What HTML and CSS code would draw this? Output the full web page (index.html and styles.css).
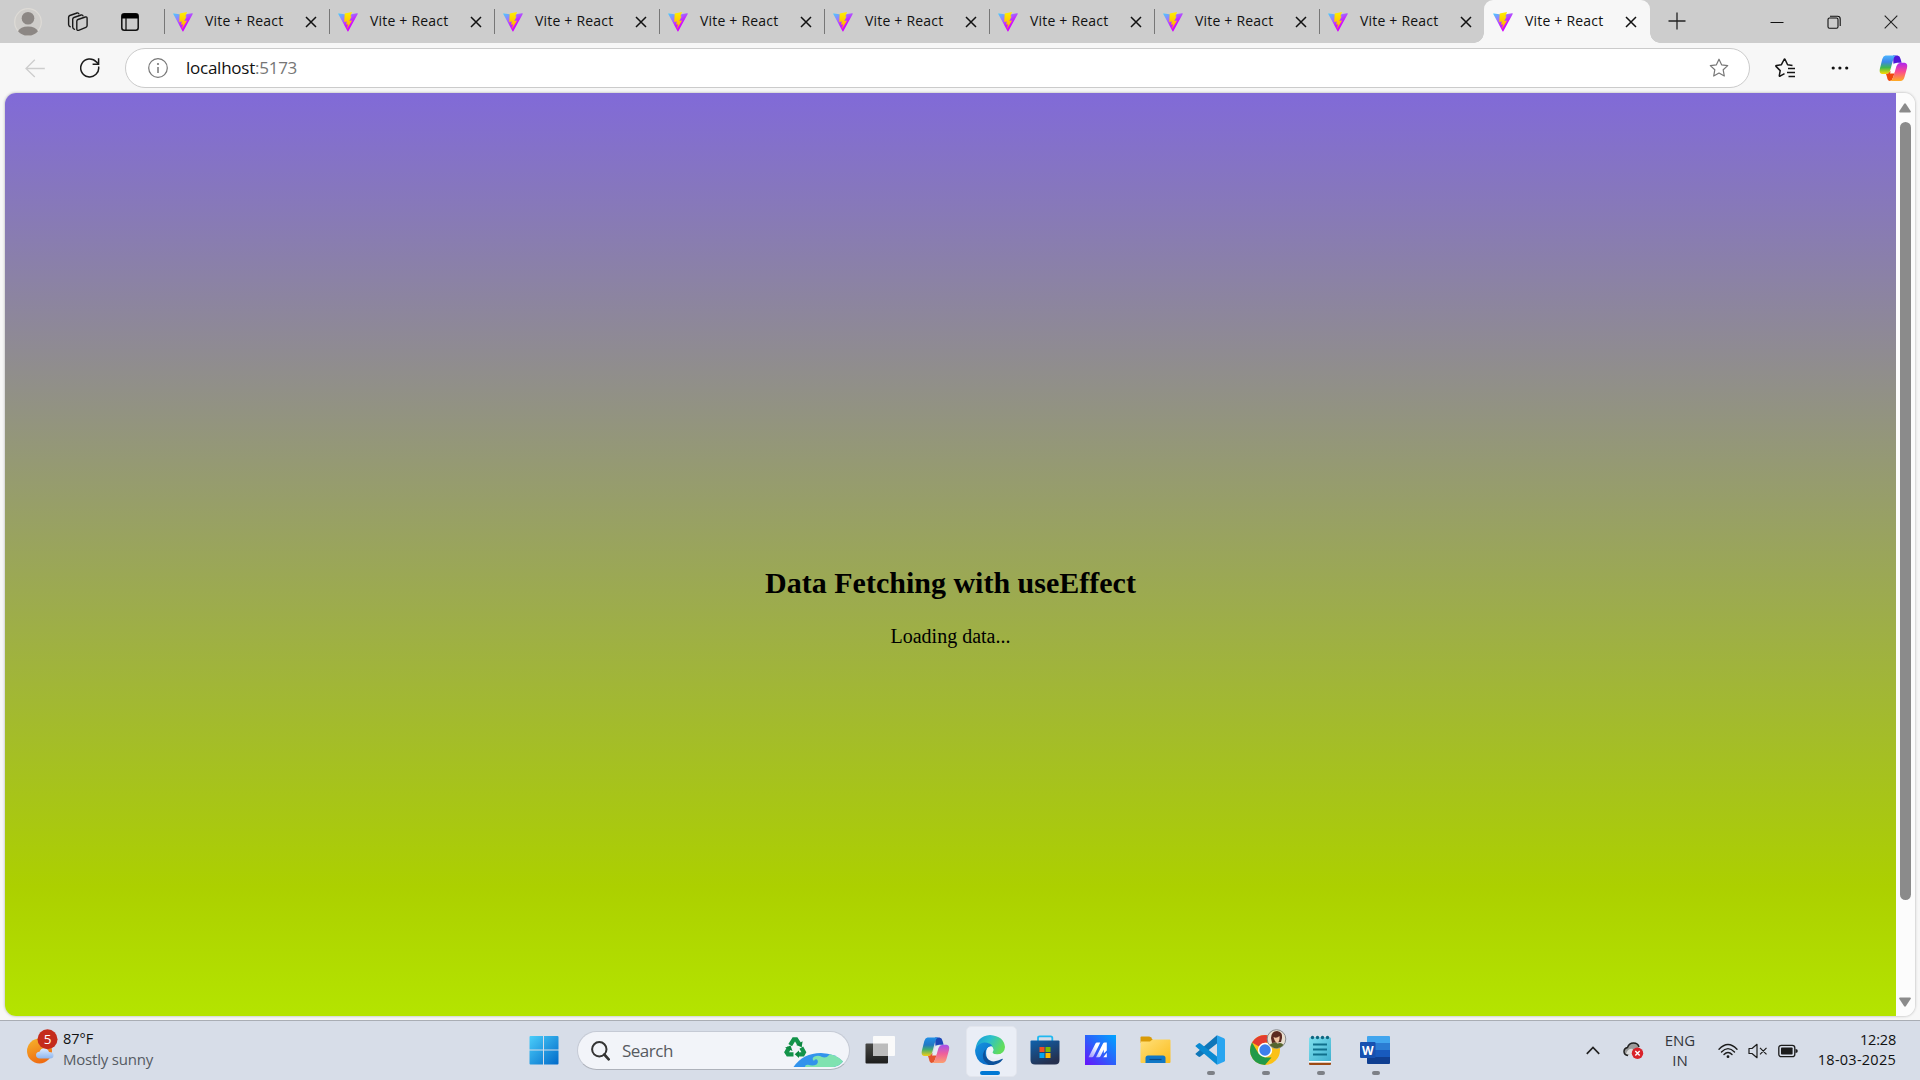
FILE: index.html
```html
<!DOCTYPE html>
<html lang="en">
<head>
<meta charset="utf-8">
<title>Vite + React</title>
<link rel="stylesheet" href="styles.css">
</head>
<body>
<svg class="defs" width="0" height="0" aria-hidden="true">
  <defs>
    <linearGradient id="viteBody" x1="0" y1="0" x2=".6" y2=".9"><stop offset="0" stop-color="#41d1ff"/><stop offset=".4" stop-color="#a074ff"/><stop offset=".7" stop-color="#c81cff"/><stop offset="1" stop-color="#d400ff"/></linearGradient>
    <linearGradient id="viteBolt" x1="0" y1="0" x2="0" y2="1"><stop offset="0" stop-color="#fff000"/><stop offset="1" stop-color="#ffa800"/></linearGradient>
    <linearGradient id="copA" x1="0" y1="0" x2="0" y2="1"><stop offset="0" stop-color="#4bb4ff"/><stop offset=".35" stop-color="#3c86e8"/><stop offset=".65" stop-color="#3fb84f"/><stop offset="1" stop-color="#ffdc00"/></linearGradient>
    <linearGradient id="copB" x1="0" y1="0" x2="0" y2="1"><stop offset="0" stop-color="#b024f0"/><stop offset=".5" stop-color="#fb4c8d"/><stop offset="1" stop-color="#ffae22"/></linearGradient>
    <linearGradient id="copA2" x1="0" y1="0" x2="0" y2="1"><stop offset="0" stop-color="#1f8fe6"/><stop offset=".4" stop-color="#2378c4"/><stop offset=".65" stop-color="#45ad6d"/><stop offset="1" stop-color="#f4ce14"/></linearGradient>
    <linearGradient id="copB2" x1="0" y1="0" x2="0" y2="1"><stop offset="0" stop-color="#a450ec"/><stop offset=".5" stop-color="#f0609a"/><stop offset="1" stop-color="#fba070"/></linearGradient>
    <linearGradient id="winG" gradientUnits="userSpaceOnUse" x1="0" y1="0" x2="30" y2="30"><stop offset="0" stop-color="#4cd0fb"/><stop offset="1" stop-color="#0068c8"/></linearGradient>
    <linearGradient id="edgeTop" x1="0" y1="0" x2="1" y2=".4"><stop offset="0" stop-color="#1496d8"/><stop offset=".5" stop-color="#2cc0cc"/><stop offset="1" stop-color="#62dd5c"/></linearGradient>
    <linearGradient id="edgeLeft" x1="0" y1="0" x2=".6" y2="1"><stop offset="0" stop-color="#1593de"/><stop offset="1" stop-color="#0a6cc8"/></linearGradient>
    <linearGradient id="storeG" x1="0" y1="0" x2=".5" y2="1"><stop offset="0" stop-color="#0f62ad"/><stop offset="1" stop-color="#25304f"/></linearGradient>
    <linearGradient id="maG" x1="0" y1="1" x2="1" y2="0"><stop offset="0" stop-color="#6a12fb"/><stop offset=".5" stop-color="#2a62fb"/><stop offset="1" stop-color="#00a5ff"/></linearGradient>
    <linearGradient id="maW" x1="0" y1="1" x2="1" y2="0"><stop offset="0" stop-color="#fff" stop-opacity=".45"/><stop offset=".6" stop-color="#fff"/></linearGradient>
    <linearGradient id="folderG" x1="0" y1="0" x2="1" y2="1"><stop offset="0" stop-color="#ffe07a"/><stop offset="1" stop-color="#fbbc1c"/></linearGradient>
    <linearGradient id="noteG" x1="0" y1="0" x2="1" y2="1"><stop offset="0" stop-color="#7fe0ee"/><stop offset="1" stop-color="#3fb0cf"/></linearGradient>
    <linearGradient id="sunG" x1="0" y1="0" x2=".4" y2="1"><stop offset="0" stop-color="#f6b52c"/><stop offset="1" stop-color="#ef6d12"/></linearGradient>
    <linearGradient id="cloudG" x1="0" y1="0" x2="0" y2="1"><stop offset="0" stop-color="#dcebff"/><stop offset="1" stop-color="#8fb6ee"/></linearGradient>
    <linearGradient id="darkG" x1="0" y1="0" x2="0" y2="1"><stop offset="0" stop-color="#484846"/><stop offset="1" stop-color="#1d1d1c"/></linearGradient>
    <symbol id="vite" viewBox="0 0 20 20">
      <path d="M.4 2.2Q0 1.2 1 1.4L10 2.8l9-1.500q1.200-.2.6.9L10.500 19q-.6 1-1.100 0z" fill="url(#viteBody)"/>
      <path d="M14 .1 6.700 1.400 6.200 10l2.600-.5-.7 3.200 2-.5-1.400 5.300 5.400-8.900-2.800.4 2.300-4.600-1.200.1z" fill="url(#viteBolt)"/>
    </symbol>
    <symbol id="x" viewBox="0 0 12 12"><path d="M1 1l10 10M11 1 1 11" fill="none" stroke="#111" stroke-width="1.500"/></symbol>
    <symbol id="star" viewBox="0 0 20 20"><path d="M10 1.200l2.600 5.600 6.100.8-4.500 4.200 1.100 6.200-5.300-3-5.300 3 1.100-6.200L1.300 7.600l6.100-.8z" fill="none" stroke="#777" stroke-width="1.200" stroke-linejoin="round"/></symbol>
  </defs>
</svg>

<div class="screen">
  <header class="tabstrip">
    <div class="strip-tools">
      <svg class="avatar" width="28" height="28" viewBox="0 0 28 28"><circle cx="14" cy="14" r="13.300" fill="#cfcdca" stroke="#dedbd6" stroke-width="1.200"/><circle cx="14" cy="10.200" r="6.300" fill="#8c8784"/><path d="M4 23.200a10.500 6.800 0 0 1 20 0A13 13 0 0 1 14 27.600 13 13 0 0 1 4 23.200z" fill="#8c8784"/></svg>
      <svg class="workspaces" width="22" height="22" viewBox="0 0 22 22" fill="none" stroke="#1a1a1a" stroke-width="1.400" stroke-linejoin="round" stroke-linecap="round"><path d="M9.800 10.300q0-1.300 1.200-1.800l7.300-2.500q1.800-.5 1.800 1.200v7.300q0 1.300-1.200 1.800l-7.300 3q-1.800.5-1.800-1.200z"/><path d="M7.500 18.300Q5.700 17.700 5.700 16V8.300q0-1.300 1.200-1.800L14.200 4q1.400-.4 1.800.9"/><path d="M3.300 15.800Q1.600 15 1.600 13.400V6.300q0-1.300 1.200-1.800L10.100 2q1.400-.4 1.800.9"/></svg>
      <svg class="tabactions" width="18" height="18" viewBox="0 0 18 18"><rect x=".8" y=".8" width="16.400" height="16.400" rx="2.500" fill="none" stroke="#111" stroke-width="1.500"/><path d="M.8 5V3Q.8.800 3 .800h12q2.200 0 2.200 2.200v2.400H.800z" fill="#000"/><path d="M5 5v12" stroke="#111" stroke-width="1.300"/></svg>
    </div>
    <nav class="tabs">
      <div class="tab"><svg class="favicon"><use href="#vite"/></svg><span class="tab-title">Vite + React</span><svg class="tab-close"><use href="#x"/></svg></div>
      <div class="tab"><svg class="favicon"><use href="#vite"/></svg><span class="tab-title">Vite + React</span><svg class="tab-close"><use href="#x"/></svg></div>
      <div class="tab"><svg class="favicon"><use href="#vite"/></svg><span class="tab-title">Vite + React</span><svg class="tab-close"><use href="#x"/></svg></div>
      <div class="tab"><svg class="favicon"><use href="#vite"/></svg><span class="tab-title">Vite + React</span><svg class="tab-close"><use href="#x"/></svg></div>
      <div class="tab"><svg class="favicon"><use href="#vite"/></svg><span class="tab-title">Vite + React</span><svg class="tab-close"><use href="#x"/></svg></div>
      <div class="tab"><svg class="favicon"><use href="#vite"/></svg><span class="tab-title">Vite + React</span><svg class="tab-close"><use href="#x"/></svg></div>
      <div class="tab"><svg class="favicon"><use href="#vite"/></svg><span class="tab-title">Vite + React</span><svg class="tab-close"><use href="#x"/></svg></div>
      <div class="tab"><svg class="favicon"><use href="#vite"/></svg><span class="tab-title">Vite + React</span><svg class="tab-close"><use href="#x"/></svg></div>
      <div class="tab tab-active"><svg class="favicon"><use href="#vite"/></svg><span class="tab-title">Vite + React</span><svg class="tab-close"><use href="#x"/></svg></div>
    </nav>
    <svg class="newtab" width="18" height="18" viewBox="0 0 18 18"><path d="M9 .5v17M.5 9h17" stroke="#222" stroke-width="1.300"/></svg>
    <div class="window-controls">
      <svg width="14" height="14" viewBox="0 0 14 14"><path d="M.5 7.500h13" stroke="#111" stroke-width="1"/></svg>
      <svg width="14" height="14" viewBox="0 0 14 14" fill="none" stroke="#111" stroke-width="1.100"><rect x="1" y="3" width="10" height="10.200" rx="1.500"/><path d="M3 1.200h7.500q2.700 0 2.700 2.700V11"/></svg>
      <svg width="14" height="14" viewBox="0 0 14 14"><path d="M.7.700l12.600 12.600M13.300.700.700 13.300" stroke="#222" stroke-width="1.100"/></svg>
    </div>
  </header>

  <div class="toolbar">
    <svg class="back" width="20" height="20" viewBox="0 0 20 20" fill="none" stroke="#cdcdcd" stroke-width="1.300"><path d="M19.800 10.500H1M9.800 1.800 1 10.500l8.800 8.500"/></svg>
    <svg class="reload" width="20" height="22" viewBox="0 0 20 22" fill="none" stroke="#1b1b1b" stroke-width="1.500"><path d="M18.600 9.500a9 9 0 1 1-2.200-4.600l2.100 2.100"/><path d="M18.600 1.200v6h-6"/></svg>
    <div class="address">
      <svg width="20" height="20" viewBox="0 0 20 20"><circle cx="10" cy="10" r="9.300" fill="none" stroke="#777" stroke-width="1.200"/><path d="M10 9v6" stroke="#777" stroke-width="1.500"/><circle cx="10" cy="6" r="1.100" fill="#777"/></svg>
      <span class="url">localhost<span class="port">:5173</span></span>
      <svg class="star" width="20" height="20"><use href="#star"/></svg>
    </div>
    <svg class="favorites" width="20" height="20" viewBox="0 0 20 20" fill="none" stroke="#151515" stroke-width="1.500" stroke-linejoin="round"><path d="M9.500 15.600 5 18.200q-.8.300-.7-.6l.9-5L1 8.400q-.5-.7.400-.9l5-.8 2.700-5.200q.5-.8 1 0l2.500 5.200 4.900.800"/><path d="M13 10.500h7M12 14.500h8M13.500 18.500H20"/></svg>
    <svg class="more" width="18" height="6" viewBox="0 0 18 6" fill="#111"><circle cx="2.200" cy="3" r="1.600"/><circle cx="8.900" cy="3" r="1.600"/><circle cx="15.700" cy="3" r="1.600"/></svg>
    <svg class="copilot" width="29" height="27" viewBox="0 0 29 27"><path d="M14 .600h4.500Q21 1 21.600 4l1 3.700H18q-2.500.3-3.500 2.300z" fill="#5018d8"/><path d="M6.500.600H17q-2 .900-2.800 4L11 16q-1 3-4 3H3Q0 18.500.800 14L3.300 4Q4.300.800 6.500.600z" fill="url(#copA)"/><path d="M7 19q2.500 0 4-2.500h5L14.300 22q-.8 3-3.300 4-2.500-.2-3-4z" fill="#f0480c"/><path d="M14.500 8.500h4L15.500 18.500H11z" fill="#fff"/><path d="M21.500 26H11q2.500-1 3.300-4L17.500 11q1-3 4-3.300H25.500Q29 8 28 13l-2.500 9q-1 3.800-4 4z" fill="url(#copB)"/></svg>
  </div>

  <div class="viewport">
    <main class="page">
      <h2>Data Fetching with useEffect</h2>
      <p>Loading data...</p>
    </main>
    <div class="scrollbar">
      <svg width="12" height="10" viewBox="0 0 12 10"><path d="M5 .900q1-1.200 2 0l4.600 7q.8 1.600-.8 1.600H1.200Q-.400 9.500.400 8z" fill="#8b8b8b"/></svg>
      <div class="thumb"></div>
      <svg class="down" width="12" height="10" viewBox="0 0 12 10"><path d="M5 9.100q1 1.200 2 0l4.600-7Q12.400.500 10.800.500H1.200Q-.400.500.400 2z" fill="#8b8b8b"/></svg>
    </div>
  </div>

  <footer class="taskbar">
    <div class="weather">
      <svg width="34" height="36" viewBox="0 0 34 36"><circle cx="13.500" cy="22" r="12.500" fill="url(#sunG)"/><path d="M14 29.500q-4-.3-4-3.500 0-3 3.500-3.300Q15 19 18.500 19.300q3.500.2 4.500 3.700 4.500 0 4.500 3.200 0 3.300-3.500 3.300z" fill="url(#cloudG)"/><circle cx="21.500" cy="10.300" r="10" fill="#c42b1c"/><text class="badge-text" x="21.500" y="15.200" text-anchor="middle">5</text></svg>
      <div class="weather-text"><span class="temp">87°F</span><span class="sky">Mostly sunny</span></div>
    </div>
    <div class="app">
      <svg width="30" height="30" viewBox="0 0 30 30" fill="url(#winG)"><path d="M1.500 1H14v13.500H.500V2q0-1 1-1zM15 1h13.500q1 0 1 1v12.500H15zM.500 15.500H14V29.500H1.500q-1 0-1-1zM15 15.500h14.500v13q0 1-1 1H15z"/></svg>
    </div>
    <div class="search">
      <svg width="19" height="20" viewBox="0 0 19 20" fill="none" stroke="#333"><circle cx="8.300" cy="8.300" r="7.200" stroke-width="2"/><path d="M13.300 13.500l4.400 4.800" stroke-width="2.600" stroke-linecap="round"/></svg>
      <span class="search-label">Search</span>
      <svg class="doodle" width="60" height="32" viewBox="0 0 60 32">
        <g transform="translate(1 0)" fill="none" stroke="#13934a" stroke-width="4.300"><path d="M6.200 9.200 9.800 3.400h2.400l3 4.600"/><path d="M5.200 11.600 2.600 16.200 4 18.400h5.500"/><path d="M17.300 11.600l2.600 4.600-1.200 2.200H14"/></g>
        <g transform="translate(1 0)" fill="#0c8740"><path d="M18.600 5.200l-.9 6-5.500-2.300z"/><path d="M1 11.800l5.500-2.300 2 5.400z"/><path d="M15 14.500v7.400l-4.300-3.700z"/></g>
        <path d="M10.500 31Q20 17.200 38 17q14 .3 22 8.500-3 4-9 5.500z" fill="#3293ec"/><path d="M22 31q0-2.500 3-2.200 5 1.500 8.500-.3 2.500-2.500.5-5-2.500-.7-3 1.500-3-2.500.5-4.500 4-1.800 7.500.5 4.500 1.500 8-2.800Q54.500 19.500 60 25.500q-3 4-9 5.500z" fill="#7fe2b0"/>
      </svg>
    </div>
    <div class="apps">
      <div class="app"><svg width="30" height="28" viewBox="0 0 30 28"><rect x=".5" y="7.500" width="22.500" height="20" rx="1" fill="url(#darkG)"/><rect x="8" y="0" width="22" height="20" rx="1" fill="#fafafa"/><rect x="8" y="7.500" width="15" height="12.500" fill="#bcbcbc"/></svg></div>
      <div class="app"><svg width="29" height="27" viewBox="0 0 29 27"><path d="M14 .600h4.500Q21 1 21.600 4l1 3.700H18q-2.500.3-3.500 2.300z" fill="#1b47b8"/><path d="M6.500.600H17q-2 .900-2.800 4L11 16q-1 3-4 3H3Q0 18.500.800 14L3.300 4Q4.300.800 6.500.600z" fill="url(#copA2)"/><path d="M7 19q2.500 0 4-2.500h5L14.300 22q-.8 3-3.300 4-2.500-.2-3-4z" fill="#e5542d"/><path d="M14.500 8.500h4L15.500 18.500H11z" fill="#e6eaf2"/><path d="M21.500 26H11q2.500-1 3.300-4L17.500 11q1-3 4-3.300H25.500Q29 8 28 13l-2.500 9q-1 3.800-4 4z" fill="url(#copB2)"/></svg></div>
      <div class="app app-focused"><svg width="30" height="30" viewBox="0 0 30 30"><path d="M.500 14Q2 1 15 0q14 1 15 12-.5 6.500-7 7.500-5 .2-6-2.200 2-2 1-4.300Q15 7.500 8.500 8 2.500 9 .500 14z" fill="url(#edgeTop)"/><path d="M.100 15Q2 8 9 7.500q6-.2 8.500 3.700-4.500-.3-6 4Q9.500 23 17 29.800 4 31.500.600 19.500 0 17 .100 15z" fill="url(#edgeLeft)"/><path d="M11.200 14q-2.700 5 .800 9 4 5 11 2.600 3-1.200 4.300-1.900.8-.1.400.9Q23 31 14.500 29.900 7 26.500 8 19q1-4 3.200-5z" fill="#0c529c"/><path d="M11.600 16q0-4 4-4.200 2.700.3 2.900 3.200-.1 1-1 2.200.2 1.700 4 2.300 4 .2 7.500-2.200-1 4-5 5.200-7 1.300-10.700-2.500-1.600-1.800-1.700-4z" fill="#eef2fa"/></svg><span class="running running-wide"></span></div>
      <div class="app"><svg width="30" height="30" viewBox="0 0 30 30"><path d="M8 7V3q0-1.700 1.700-1.700h11Q22.300 1.300 22.300 3v4" fill="none" stroke="#20b8f0" stroke-width="1.800"/><path d="M1.500 5.500h27q1 0 1 1V25q0 4.500-4.500 4.500H5Q.500 29.500.500 25V6.500q0-1 1-1z" fill="url(#storeG)"/><path d="M9.500 12H14.500v5H9.500z" fill="#f25022"/><path d="M15.500 12h5v5h-5z" fill="#7fba00"/><path d="M9.500 18h5v5h-5z" fill="#00a4ef"/><path d="M15.500 18h5v5h-5z" fill="#ffb900"/></svg></div>
      <div class="app"><svg width="31" height="30" viewBox="0 0 31 30"><path d="M0 0h31v30H0z" fill="url(#maG)"/><path d="M3.500 22.300 10.500 8.500q.5-1 1.500-1h3.300L8.500 21.300q-.5 1-1.500 1zM11 22.300 18 8.500q.5-1 1.500-1h2.300v8l-3 3V14.500L15.500 21.300q-.5 1-1.500 1z" fill="url(#maW)"/><path d="M18.300 22.300l3.500-4.500v4.500z" fill="#fff"/></svg></div>
      <div class="app"><svg width="31" height="28" viewBox="0 0 31 28"><path d="M.500 1.500q0-1 1-1H9q1 0 1.800.8L13 4v3H.500z" fill="#d99a06"/><path d="M.500 5.500H10L12.500 3.500H29.500q1 0 1 1V26q0 1-1 1h-28q-1 0-1-1z" fill="url(#folderG)"/><path d="M5.500 27v-5q0-2.500 2.500-2.500h15q2.500 0 2.500 2.500v5z" fill="#0f77c6"/><path d="M9.500 23.500h12" stroke="#0a4b86" stroke-width="1.200"/></svg></div>
      <div class="app"><svg width="30" height="30" viewBox="0 0 30 30"><path d="M.700 18.500 22 .300v8.200L5.400 21.500q-1 .8-2 0l-2.600-2q-.7-.5-.1-1z" fill="#0f76b8"/><path d="M.700 11.500 22 29.700v-8.200L5.400 8.500q-1-.8-2 0l-2.600 2q-.7.500-.1 1z" fill="#0a8ad2"/><path d="M22 .300 29 3.300q1 .5 1 1.500v20.400q0 1-1 1.500l-7 3z" fill="#29a5f0"/></svg><span class="running"></span></div>
      <div class="app app-chrome"><svg width="37" height="36" viewBox="0 0 37 36"><circle cx="15" cy="21" r="15" fill="#fbc116"/><path d="M15 21 2 13.500Q6.500 6 15 6t13 7.500H15z" fill="#e33b2e"/><path d="M2 13.500 8.500 24.500 15 28.500h6.500L15 36Q4 35.500.600 25.500-1 19 2 13.500z" fill="#219a49"/><circle cx="15" cy="21" r="7.200" fill="#fff"/><circle cx="15" cy="21" r="5.700" fill="#3d7fec"/><circle cx="26.500" cy="10" r="9.300" fill="#e9dfcf" stroke="#888b90" stroke-width="1"/><path d="M21 9q.5-7 6-7 6 1 5 7l-1 4-9 1z" fill="#5c2a20"/><path d="M23.500 8q3 2 6-1 .5 5-2 7-3-1-4-6z" fill="#f0c3a0"/><path d="M19.500 16q5-4 8-1.500 4-1.500 6 1.500-6 6.500-14 0z" fill="#56652f"/></svg><span class="running"></span></div>
      <div class="app"><svg width="22" height="31" viewBox="0 0 22 31"><path d="M0 27.500h22V29q0 1-1 1H1q-1 0-1-1z" fill="#9c4a14"/><path d="M0 25h22v2.500H0z" fill="#fff"/><path d="M1 2.500h20q1 0 1 1V26H0V3.500q0-1 1-1z" fill="url(#noteG)"/><g fill="#0e6680"><circle cx="3.500" cy="2.500" r="1.700"/><circle cx="8.500" cy="2.500" r="1.700"/><circle cx="13.500" cy="2.500" r="1.700"/><circle cx="18.500" cy="2.500" r="1.700"/></g><path d="M4 9.500h14M4 14.500h14M4 19.500h14" stroke="#10708c" stroke-width="1.800"/></svg><span class="running"></span></div>
      <div class="app"><svg width="30" height="28" viewBox="0 0 30 28"><path d="M7 1q0-1 1-1h21q1 0 1 1v6.500H7z" fill="#41a5ee"/><path d="M7 7h23v7H7z" fill="#2b7cd3"/><path d="M7 14h23v7H7z" fill="#185abd"/><path d="M7 21h23v6q0 1-1 1H8q-1 0-1-1z" fill="#103f91"/><rect x="0" y="6" width="15.500" height="16" rx="1" fill="#1751b0"/><text class="word-letter" x="7.700" y="18.500" text-anchor="middle">W</text></svg><span class="running"></span></div>
    </div>
    <div class="tray">
      <svg class="chevron" width="14" height="9" viewBox="0 0 14 9"><path d="M.8 7.800 7 1.500l6.200 6.300" fill="none" stroke="#222" stroke-width="1.700"/></svg>
      <svg class="cloud" width="21" height="19" viewBox="0 0 21 19"><path d="M5 14.500q-4-.5-4-4.200Q1.200 7 4.500 6.500 6 2 10.500 2T16 6" fill="#9b9b9b" stroke="#222" stroke-width="1.500"/><path d="M3 13q2-6 7-5v6z" fill="#ddd"/><circle cx="14.500" cy="12.300" r="5.700" fill="#d9222a"/><path d="M12.300 10.100l4.400 4.400M16.700 10.100l-4.400 4.400" stroke="#fff" stroke-width="1.400"/></svg>
      <div class="lang"><span>ENG</span><span>IN</span></div>
      <svg class="wifi" width="20" height="16" viewBox="0 0 20 16" fill="none" stroke="#1c1c1c" stroke-width="1.400" stroke-linecap="round"><path d="M1 6.200q9-9.500 18 0M3.500 9q6.500-6.800 13 0M6 11.600q4-4.200 8 0"/><circle cx="10" cy="13.700" r="1.400" fill="#1c1c1c" stroke="none"/></svg>
      <svg class="sound" width="20" height="16" viewBox="0 0 20 16" fill="none" stroke="#1c1c1c" stroke-width="1.200" stroke-linejoin="round"><path d="M1 5.500h3L9 1.300v13.400L4 10.500H1zM12 4.800l6.500 6.500M18.500 4.800 12 11.300"/></svg>
      <svg class="battery" width="20" height="14" viewBox="0 0 20 14"><rect x=".8" y="1.300" width="16" height="11.400" rx="2.500" fill="none" stroke="#1c1c1c" stroke-width="1.300"/><rect x="3" y="3.500" width="11.600" height="7" rx=".8" fill="#1c1c1c"/><path d="M17.500 5q2.300.2 2.300 2t-2.300 2z" fill="#1c1c1c"/></svg>
      <div class="clock"><span class="time">12:28</span><span>18-03-2025</span></div>
    </div>
  </footer>
</div>
</body>
</html>
```

FILE: styles.css
```css
* { box-sizing: border-box; }
body { margin: 0; font-family: "Open Sans", "Noto Sans", sans-serif; color: #111; }
svg { display: block; flex: none; }
.defs { position: absolute; }
.screen { display: flex; flex-direction: column; width: 1920px; height: 1080px; overflow: hidden; background: #f7f7f7; }

.tabstrip { display: flex; align-items: center; height: 43px; background: #cdcdcd; }
.strip-tools { display: flex; align-items: center; width: 164px; padding-left: 14px; }
.workspaces { margin-left: 25px; }
.tabactions { margin-left: 32px; }
.tabs { display: flex; height: 43px; }
.tab { display: flex; align-items: center; width: 165px; padding-left: 9px; background: linear-gradient(#777, #777) 0 9px / 1px 25px no-repeat; }
.favicon { width: 20px; height: 20px; margin-top: 1px; }
.tab-title { width: 88px; margin-left: 12px; margin-top: -2px; font-size: 14px; letter-spacing: 0.2px; white-space: nowrap; }
.tab-close { width: 12px; height: 12px; margin-left: 11.500px; }
.tab-active { position: relative; width: 166px; background: #f7f7f7; border-radius: 9px 9px 0 0; }
.tab-active::before, .tab-active::after { content: ""; position: absolute; bottom: 0; width: 10px; height: 10px; }
.tab-active::before { left: -10px; background: radial-gradient(circle at 0 0, transparent 9.500px, #f7f7f7 10px); }
.tab-active::after { right: -10px; background: radial-gradient(circle at 100% 0, transparent 9.500px, #f7f7f7 10px); }
.newtab { margin-left: 18px; margin-top: -2px; }
.window-controls { display: flex; gap: 43px; margin-left: auto; padding-right: 22px; }

.toolbar { display: flex; align-items: center; height: 50px; }
.back { margin-left: 25px; }
.reload { margin-left: 35px; }
.address { display: flex; align-items: center; width: 1625px; height: 40px; margin-left: 25px; padding: 0 20px 0 22px; background: #fff; border: 1px solid #cbcbcb; border-radius: 20px; }
.url { margin-left: 18px; margin-top: -2px; font-size: 17px; letter-spacing: -0.25px; }
.port { color: #767676; }
.star { margin-left: auto; }
.favorites { margin-left: 25px; }
.more { margin-left: 36px; }
.copilot { margin-left: 30px; }

.viewport { display: flex; height: 923px; margin: 0 5px; border-radius: 11px; overflow: hidden; box-shadow: 0 0 3px rgba(0, 0, 0, 0.3); }
.page { display: flex; flex-direction: column; align-items: center; justify-content: flex-end; width: 1891px; padding-bottom: 368px; font-family: "Liberation Serif", serif; font-size: 20px; color: #000; background: linear-gradient(#816ad8 0%, #acd000 86%, #b4e400 100%); }
.page h2 { margin: 0 0 25px; font-size: 30px; line-height: 34px; }
.page p { margin: 0; line-height: 23px; }
.scrollbar { display: flex; flex-direction: column; align-items: center; width: 19px; padding: 10px 1px 9px 0; background: #fcfcfc; }
.thumb { width: 11px; height: 778px; margin-top: 9px; border-radius: 6px; background: #8b8b8b; }
.down { margin-top: auto; }

.taskbar { display: flex; align-items: center; height: 60px; margin-top: 4px; background: #d7dde8; border-top: 1px solid #a9adb4; }
.weather { display: flex; align-items: center; width: 517px; padding-left: 26px; }
.weather svg { margin-top: -8px; }
.badge-text { font-size: 13.500px; fill: #fff; }
.weather-text { display: flex; flex-direction: column; margin-left: 3px; margin-top: -3px; font-size: 14.500px; line-height: 20px; }
.sky { color: #555a62; font-size: 15px; letter-spacing: -0.2px; }
.app { position: relative; display: flex; align-items: center; justify-content: center; width: 55px; height: 59px; padding: 0 1px 1px 0; }
.app-focused::before { content: ""; position: absolute; left: 3px; top: 5px; width: 49px; height: 49px; background: #eaeef6; border: 1px solid #e2e5ed; border-radius: 5px; }
.app-focused svg { position: relative; }
.running { position: absolute; bottom: 5px; left: 24px; width: 8px; height: 4px; border-radius: 2px; background: #7d8086; }
.running-wide { left: 17px; width: 20px; background: #0078d4; }
.app-chrome svg { margin: -6px 0 0 7px; }
.apps { display: flex; margin-left: 3px; }
.word-letter { font-size: 12px; font-weight: 700; fill: #fff; }
.search { display: flex; align-items: center; width: 273px; height: 39px; margin-left: 5px; padding-left: 13px; padding-right: 6px; background: #f2f4f9; border: 1px solid #c5cad5; border-bottom-color: #aeb2bb; border-radius: 20px; overflow: hidden; }
.search-label { margin-left: 12px; font-size: 17px; letter-spacing: -0.5px; color: #575a60; }
.doodle { margin-left: auto; margin-top: 3px; }
.tray { display: flex; align-items: center; flex: 1; padding-left: 183px; }
.cloud { margin-left: 23px; }
.lang, .clock { display: flex; flex-direction: column; font-size: 14.500px; line-height: 20px; margin-top: -1px; }
.lang { width: 40px; margin-left: 16px; align-items: center; color: #33363c; font-size: 15px; }
.wifi { margin-left: 18px; }
.sound { margin-left: 10px; }
.battery { margin-left: 10px; }
.clock { width: 98px; align-items: flex-end; letter-spacing: 0.25px; white-space: nowrap; }
.time { letter-spacing: -0.2px; }
```
